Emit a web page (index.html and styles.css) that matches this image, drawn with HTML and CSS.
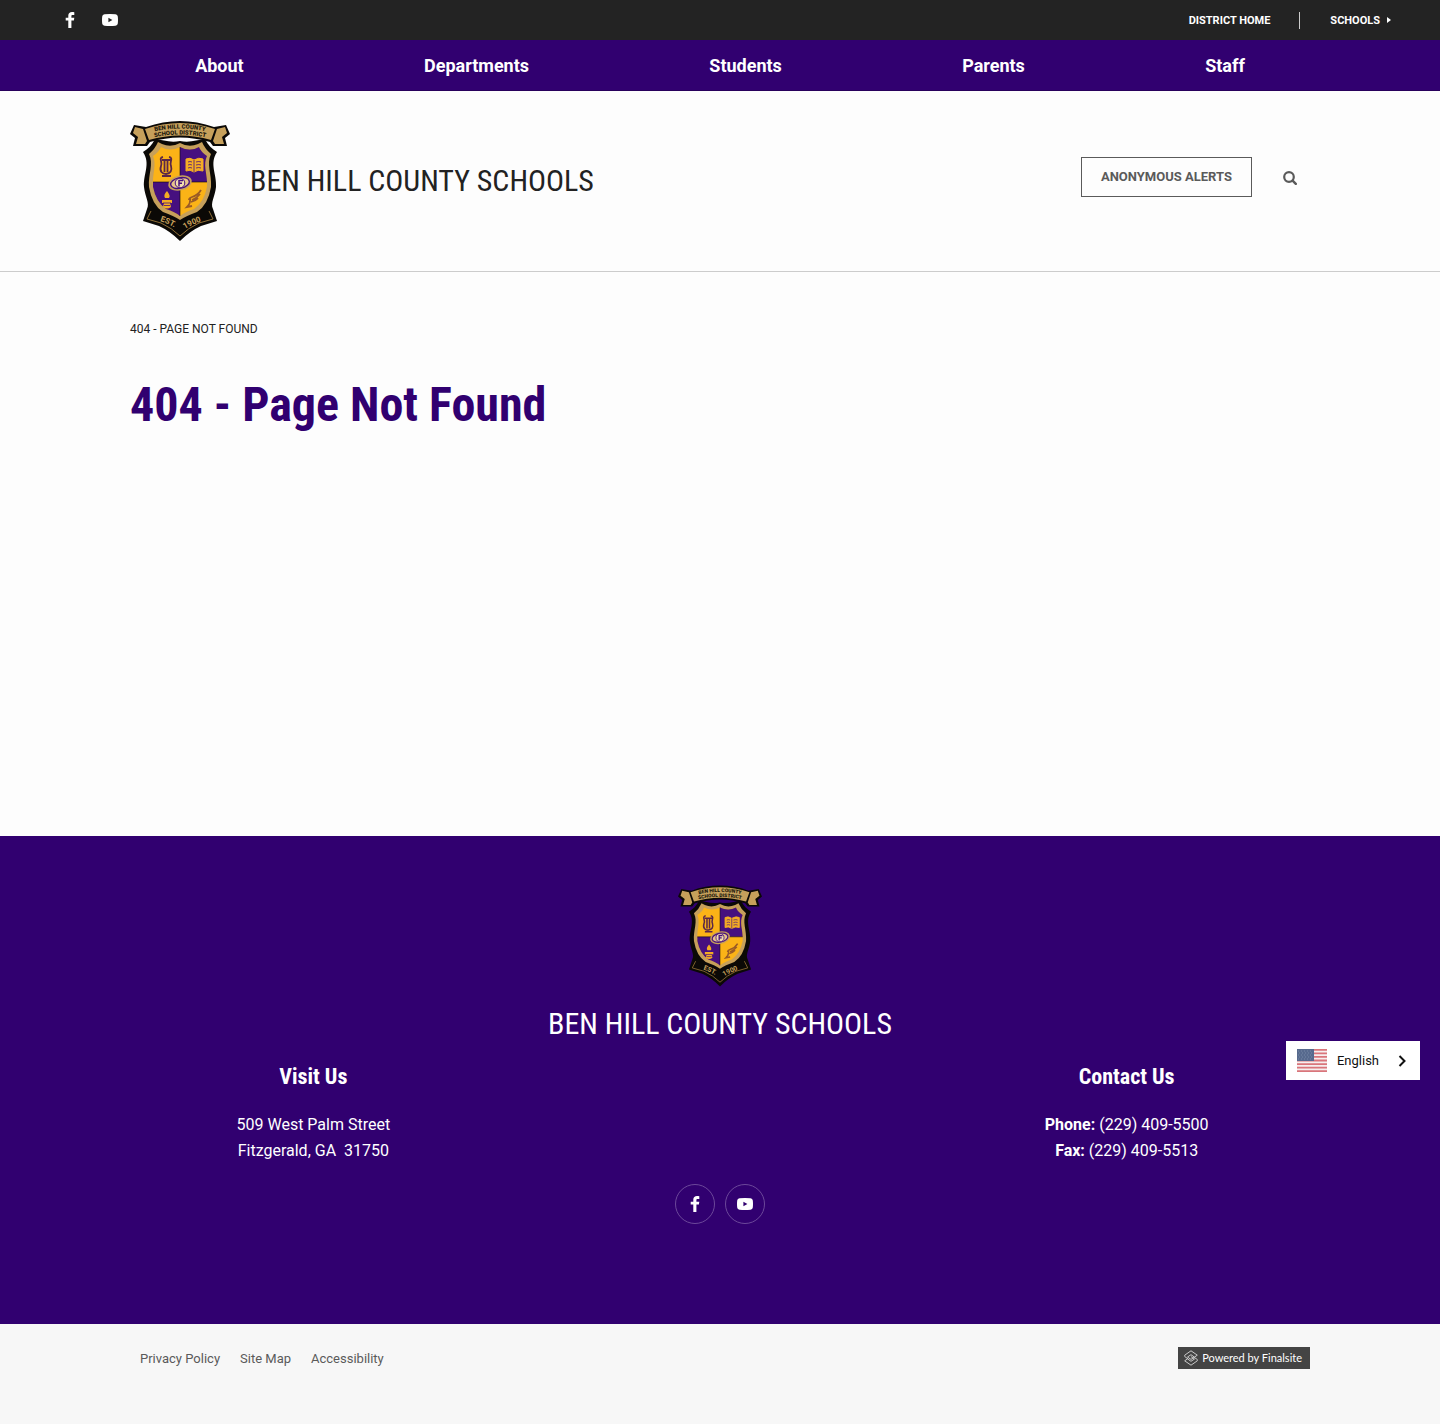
FILE: index.html
```
<!DOCTYPE html>
<html lang="en">
<head>
    <meta charset="UTF-8">
    <meta name="viewport" content="width=device-width, initial-scale=1.0">
    <title>404 - Page Not Found - Ben Hill County Schools</title>
    <link rel="stylesheet" href="styles.css">
</head>
<body>
    <!-- Shared icons -->
    <svg class="sprite" viewBox="0 0 100 120" aria-hidden="true">
        <symbol id="icon-facebook" viewBox="0 0 16 16">
            <path d="M12.300 .2v2.700h-1.600c-1.100 0-1.300.5-1.300 1.300v1.500h2.900l-.4 2.900H9.400V16H6.300V8.600H3.700V5.700h2.600V3.600C6.300 1.200 7.800 0 10 0c1.100 0 2 .1 2.300.2z"/>
        </symbol>
        <symbol id="icon-youtube" viewBox="0 0 16 16">
            <path fill-rule="evenodd" d="M2.500 2.200Q8 1.700 13.500 2.200Q15.600 2.400 15.800 4.500Q16.200 8 15.800 11.500Q15.600 13.600 13.500 13.800Q8 14.300 2.500 13.800Q.4 13.600.2 11.500Q-.2 8 .2 4.500Q.4 2.400 2.500 2.200zM6.400 5.700v4.600L10.400 8z"/>
        </symbol>
        <symbol id="crest" viewBox="0 0 100 120">
            <!-- shield outline and ribbon -->
            <path fill="#0b0906" d="M50 20C40 22 33 19 25 18C22 24 18 28 13 31C21 43 13 53 14 66C15 76 20 82 17 88L13 100L29 105Q40 110 50 120Q60 110 71 105L87 100L83 88C80 82 85 76 86 66C87 53 79 43 87 31C82 28 78 24 75 18C67 19 60 22 50 20z"/>
            <path fill="none" stroke="#8f6e35" d="M21 90L17 98L31 102Q42 107 50 115Q58 107 69 102L83 98L79 90"/>
            <!-- gold frame -->
            <path fill="#c6a05b" d="M50 22Q41 27 32 23L28 21Q25 28 19 33C24 43 18 53 19 66Q22 84 33 91Q44 95 50 99Q56 95 67 91Q78 84 81 66C82 53 76 43 81 33Q75 28 72 21L68 23Q59 27 50 22z"/>
            <path fill="#fbb317" d="M50 26Q40 31 31 26Q29 31 23 35C27 44 22 53 23 66Q26 81 36 88Q45 91 50 95Q55 91 64 88Q74 81 77 66C78 53 73 44 77 35Q71 31 69 26Q60 31 50 26z"/>
            <path fill="#46107f" d="M50 26Q60 31 69 26Q71 31 77 35C73 44 77 52 77 61H50zM23 61H50V95Q45 91 36 88Q26 81 23 66z"/>
            <path stroke="#0b0906" stroke-width=".6" d="M50 26V95M23 61H77"/>
            <!-- lyre -->
            <path fill="none" stroke="#5b2748" stroke-width="1.800" d="M33 36C28 37 33 41 31 45C29 51 33 53 36 53Q43 52 41 45C39 41 44 37 39 36M32 39H41M34.500 39V51M37.500 39V51M32 55H41"/>
            <!-- book -->
            <path fill="#f4ad24" stroke="#f4ad24" stroke-linejoin="round" d="M56 38Q60 36 64 39Q69 36 73 38V50Q68 48 64 51Q60 48 56 50z"/>
            <path fill="none" stroke="#46107f" stroke-width=".8" d="M64 39V51M58 41Q60 40 62 41M58 44Q60 43 62 44M58 47Q60 46 62 47M66 41Q69 40 71 41M66 44Q69 43 71 44M66 47Q69 46 71 47"/>
            <!-- torch -->
            <path fill="#f4ad24" d="M37 70Q41 75 39 77H35Q33 74 37 70zM32 79H42V82H40L41 86Q37 89 33 86L34 82H32z"/>
            <path stroke="#46107f" stroke-width=".8" d="M33 82H41M34 84.500H40"/>
            <!-- winged foot -->
            <path fill="none" stroke="#9a5b26" stroke-width="1.800" d="M71 69Q68 74 62 76Q59 77 59 79M70 73Q67 77 62 79M68 77Q65 80 61 81M60 77Q61 82 57 86L62 85"/>
            <!-- centre emblem -->
            <ellipse cx="50" cy="62" rx="12" ry="7.500" fill="#c6a05b" transform="rotate(-12 50 62)"/>
            <ellipse cx="50" cy="62" rx="9.500" ry="5.300" fill="#e7c48c" stroke="#46107f" stroke-width="1.400" transform="rotate(-12 50 62)"/>
            <circle cx="50" cy="62" r="4.800" fill="#f1dcae" stroke="#46107f"/>
            <path fill="none" stroke="#46107f" stroke-width="1.500" d="M49 65.500V59.500H53M49 62.300H52"/>
            <!-- top banner -->
            <path fill="#0b0906" d="M0 13L4 4L16 6Q50 -6 84 6L96 4L100 13L95 17L97 25L83 25L80 21Q50 12 20 21L17 25L3 25L5 17z"/>
            <path fill="#c6a05b" d="M3 12L5 6L13 8L17 20L15 23L6 23L8 16zM97 12L95 6L87 8L83 20L85 23L94 23L92 16z"/>
            <path fill="#c6a05b" d="M15 8Q50 -4 85 8L81 19Q50 10 19 19z"/>
            <path id="banner-top" fill="none" d="M18 12Q50 3 82 12"/>
            <path id="banner-bottom" fill="none" d="M18 18Q50 9 82 18"/>
            <path id="ribbon-left" fill="none" d="M30 100Q40 103 48 109"/>
            <path id="ribbon-right" fill="none" d="M55 108Q63 103 75 99"/>
            <text class="crest-banner"><textPath href="#banner-top" startOffset="50%" text-anchor="middle">BEN HILL COUNTY</textPath></text>
            <text class="crest-banner"><textPath href="#banner-bottom" startOffset="50%" text-anchor="middle">SCHOOL DISTRICT</textPath></text>
            <text class="crest-ribbon"><textPath href="#ribbon-left">EST.</textPath></text>
            <text class="crest-ribbon"><textPath href="#ribbon-right">1900</textPath></text>
        </symbol>
    </svg>

    <div class="top-bar">
        <div class="top-social">
            <a href="#" aria-label="Facebook"><svg class="icon"><use href="#icon-facebook"/></svg></a>
            <a href="#" aria-label="YouTube"><svg class="icon"><use href="#icon-youtube"/></svg></a>
        </div>
        <div class="top-links">
            <a href="#">District Home</a>
            <button type="button" class="schools-toggle">Schools <span class="caret"></span></button>
        </div>
    </div>

    <nav class="main-nav">
        <ul>
            <li><a href="#">About</a></li>
            <li><a href="#">Departments</a></li>
            <li><a href="#">Students</a></li>
            <li><a href="#">Parents</a></li>
            <li><a href="#">Staff</a></li>
        </ul>
    </nav>

    <header class="header">
        <div class="container header-inner">
            <a href="#" class="brand">
                <svg class="brand-logo" aria-hidden="true"><use href="#crest"/></svg>
                <span class="site-title">Ben Hill County Schools</span>
            </a>
            <div class="header-tools">
                <a href="#" class="alert-button">Anonymous Alerts</a>
                <button type="button" class="search-button" aria-label="Search">
                    <svg viewBox="0 0 14 14"><circle cx="6" cy="6" r="4.800" fill="none" stroke="currentColor" stroke-width="2.200"/><path d="M9.600 9.600L12.800 12.800" stroke="currentColor" stroke-width="2.400" stroke-linecap="round"/></svg>
                </button>
            </div>
        </div>
    </header>

    <main class="main">
        <div class="container">
            <div class="breadcrumb">404 - Page Not Found</div>
            <h1>404 - Page Not Found</h1>
        </div>
    </main>

    <footer class="footer">
        <div class="footer-brand">
            <svg class="footer-logo" aria-hidden="true"><use href="#crest"/></svg>
            <div class="site-title">Ben Hill County Schools</div>
        </div>
        <div class="footer-columns">
            <section class="visit">
                <h2>Visit Us</h2>
                <p>509 West Palm Street<br>Fitzgerald, GA&nbsp; 31750</p>
            </section>
            <section class="contact">
                <h2>Contact Us</h2>
                <p><strong>Phone:</strong> (229) 409-5500<br><strong>Fax:</strong> (229) 409-5513</p>
            </section>
        </div>
        <div class="footer-social">
            <a href="#" aria-label="Facebook"><svg class="icon"><use href="#icon-facebook"/></svg></a>
            <a href="#" aria-label="YouTube"><svg class="icon"><use href="#icon-youtube"/></svg></a>
        </div>

        <button type="button" class="language">
            <svg class="flag" viewBox="0 0 30 23" aria-hidden="true">
                <rect width="30" height="23" fill="#f6eeee"/>
                <path stroke="#d9757b" stroke-width="1.770" d="M0 .88H30M0 4.420H30M0 7.960H30M0 11.500H30M0 15.040H30M0 18.580H30M0 22.120H30"/>
                <rect width="17" height="12" fill="#576a8e"/>
                <path stroke="#7788a5" stroke-dasharray="1 2" d="M1 2H16M2 4H16M1 6H16M2 8H16M1 10H16"/>
            </svg>
            <span>English</span>
            <svg class="chevron" viewBox="0 0 8 12" aria-hidden="true"><path d="M1.500 1L6.500 6L1.500 11" fill="none" stroke="#111" stroke-width="2"/></svg>
        </button>
    </footer>

    <div class="bottom-bar">
        <div class="container bottom-inner">
            <ul class="bottom-links">
                <li><a href="#">Privacy Policy</a></li>
                <li><a href="#">Site Map</a></li>
                <li><a href="#">Accessibility</a></li>
            </ul>
            <a href="#" class="powered">
                <svg viewBox="0 0 14 16" aria-hidden="true"><path d="M10 6.800L7 4.700L3.500 7L7 9.400L13.300 5.200L7 .8L.7 5.200V6.500L4 8.900M4 9.200L7 11.300L10.500 9L7 6.600M10 7.200L13.300 9.500V10.800L7 15.200L.7 10.800L4 8.500" fill="none" stroke="#c9c9c9" stroke-width="1"/></svg>
                <span>Powered by Finalsite</span>
            </a>
        </div>
    </div>
</body>
</html>
```
FILE: styles.css
```
* {
    box-sizing: border-box;
}

body {
    margin: 0;
    min-height: 100vh;
    display: flex;
    flex-direction: column;
    font-family: Roboto, "Liberation Sans", sans-serif;
    font-size: 16px;
    line-height: 26px;
    color: #222;
    background-color: #fdfdfd;
}

a {
    color: inherit;
    text-decoration: none;
}

ul {
    list-style: none;
    margin: 0;
    padding: 0;
}

button {
    font-family: inherit;
    color: inherit;
    border: none;
    background: none;
    padding: 0;
    cursor: pointer;
}

.sprite {
    position: absolute;
    width: 0;
    height: 0;
}

.icon {
    display: block;
    width: 16px;
    height: 16px;
    fill: white;
}

.container {
    width: 100%;
    max-width: 1220px;
    margin: 0 auto;
    padding: 0 20px;
}

.site-title {
    font-family: "Roboto Condensed", Roboto, sans-serif;
    font-size: 30px;
    line-height: 36px;
    text-transform: uppercase;
}

/* Crest lettering */
.crest-banner {
    font-size: 6px;
    line-height: 6px;
    font-weight: 900;
    fill: #21180c;
}

.crest-ribbon {
    font-size: 8px;
    font-weight: bold;
    fill: #c6a05b;
}

/* Top bar */
.top-bar {
    display: flex;
    justify-content: space-between;
    align-items: center;
    height: 40px;
    padding: 0 49px 0 62px;
    background-color: #232323;
    color: white;
}

.top-social {
    display: flex;
    gap: 24px;
}

.top-links {
    display: flex;
    align-items: center;
    font-size: 11px;
    line-height: 17px;
    font-weight: bold;
    text-transform: uppercase;
}

.schools-toggle {
    display: flex;
    align-items: center;
    gap: 7px;
    margin-left: 29px;
    padding-left: 30px;
    border-left: 1px solid #ccc;
    font-size: 11px;
    line-height: 17px;
    font-weight: bold;
    text-transform: uppercase;
}

.caret {
    border-left: 4px solid white;
    border-top: 3px solid transparent;
    border-bottom: 3px solid transparent;
}

/* Main navigation */
.main-nav {
    background-color: #310070;
    color: white;
    border-bottom: 1px solid #28005c;
}

.main-nav ul {
    display: flex;
    justify-content: space-around;
    max-width: 1230px;
    margin: 0 auto;
}

.main-nav a {
    display: block;
    padding: 13px 0 11px;
    font-size: 18px;
    font-weight: bold;
}

/* Header */
.header {
    padding: 30px 0;
    border-bottom: 1px solid #ccc;
}

.header-inner {
    display: flex;
    justify-content: space-between;
    align-items: center;
}

.brand {
    display: flex;
    align-items: center;
    gap: 20px;
}

.brand-logo {
    width: 100px;
    height: 120px;
}

.header-tools {
    display: flex;
    align-items: center;
    gap: 31px;
    padding: 0 13px 8px 0;
    color: #5a5a5a;
}

.alert-button {
    padding: 6px 19px;
    border: 1px solid #5a5a5a;
    font-size: 13px;
    font-weight: bold;
    text-transform: uppercase;
}

.search-button {
    padding-top: 2px;
}

.search-button svg {
    display: block;
    width: 14px;
    height: 14px;
}

/* Page content */
.main {
    flex: 1;
    padding: 44px 0 50px;
}

.breadcrumb {
    font-size: 12px;
    text-transform: uppercase;
}

h1 {
    margin: 34px 0 0;
    font-family: "Roboto Condensed", Roboto, sans-serif;
    font-size: 48px;
    line-height: 58px;
    color: #310070;
}

/* Footer */
.footer {
    position: relative;
    padding: 49px 0 100px;
    background-color: #310070;
    color: white;
    text-align: center;
}

.footer-logo {
    display: block;
    width: 84px;
    height: 102px;
    margin: 0 auto 19px;
}

.footer-columns {
    display: grid;
    grid-template-columns: repeat(3, 1fr);
    max-width: 1220px;
    margin: 20px auto 0;
}

.contact {
    grid-column: 3;
}

.footer h2 {
    margin: 0 0 20px;
    font-family: "Roboto Condensed", Roboto, sans-serif;
    font-size: 22px;
    line-height: 30px;
}

.footer p {
    margin: 0;
}

.footer-social {
    display: flex;
    justify-content: center;
    gap: 10px;
    margin-top: 20px;
}

.footer-social a {
    display: flex;
    align-items: center;
    justify-content: center;
    width: 40px;
    height: 40px;
    border: 1px solid #6c489a;
    border-radius: 50%;
}

/* Language picker floats over the footer */
.language {
    position: absolute;
    top: 205px;
    right: 20px;
    display: flex;
    align-items: center;
    padding: 8px 14px 8px 11px;
    background-color: white;
    color: #111;
    font-size: 13px;
}

.flag {
    width: 30px;
    height: 23px;
    margin-right: 10px;
}

.chevron {
    width: 8px;
    height: 12px;
    margin-left: 19px;
}

/* Bottom bar */
.bottom-bar {
    padding: 22px 0 52px;
    background-color: #f7f7f7;
}

.bottom-inner {
    display: flex;
    justify-content: space-between;
    align-items: flex-start;
}

.bottom-links {
    display: flex;
    gap: 20px;
    padding-left: 10px;
    font-size: 13px;
    color: #5a5a5a;
}

.powered {
    display: flex;
    align-items: center;
    gap: 4px;
    margin-top: 1px;
    padding: 0 8px 0 6px;
    background-color: #444;
    color: white;
    font-family: Lato, sans-serif;
    font-size: 11px;
    line-height: 22px;
}

.powered svg {
    width: 14px;
    height: 16px;
}
```
